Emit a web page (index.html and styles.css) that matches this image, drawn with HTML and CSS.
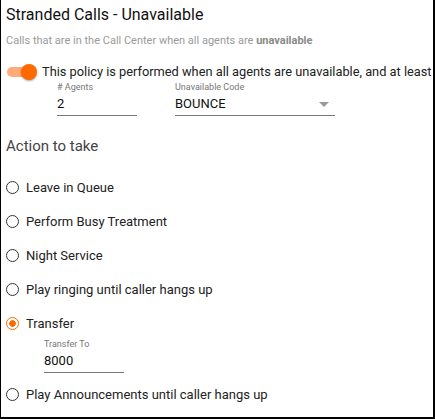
FILE: index.html
```html
<!DOCTYPE html>
<html lang="en">
<head>
    <meta charset="UTF-8">
    <title>Stranded Calls - Unavailable</title>
    <link rel="stylesheet" href="styles.css">
</head>
<body>

<div class="panel">
    <h2 class="title">Stranded Calls - Unavailable</h2>
    <p class="subtitle">Calls that are in the Call Center when all agents are <b>unavailable</b></p>

    <div class="policy">
        <span class="toggle"><span class="thumb"></span></span>
        <span class="policy-text">This policy is performed when all agents are unavailable, and at least</span>
    </div>

    <div class="fields">
        <div class="field agents">
            <label>&#35; Agents</label>
            <div class="value">2</div>
        </div>
        <div class="field code">
            <label>Unavailable Code</label>
            <div class="value">BOUNCE<span class="arrow"></span></div>
        </div>
    </div>

    <h3 class="section">Action to take</h3>

    <div class="options">
        <div class="option"><span class="radio"></span>Leave in Queue</div>
        <div class="option"><span class="radio"></span>Perform Busy Treatment</div>
        <div class="option"><span class="radio"></span>Night Service</div>
        <div class="option"><span class="radio"></span>Play ringing until caller hangs up</div>
        <div class="option"><span class="radio checked"></span>Transfer</div>
        <div class="field transfer">
            <label>Transfer To</label>
            <div class="value">8000</div>
        </div>
        <div class="option"><span class="radio"></span>Play Announcements until caller hangs up</div>
    </div>
</div>

</body>
</html>
```

FILE: styles.css
```css
body {
    margin: 0;
    font-family: Roboto, "Liberation Sans", sans-serif;
    color: #222;
}
.panel {
    width: 435px;
    height: 419px;
    border-left: 1px solid #000;
    border-right: 2px solid #000;
    border-bottom: 2px solid #000;
    padding: 0 0 0 5px;
    box-sizing: border-box;
    overflow: hidden;
}
.title {
    font-size: 16px;
    font-weight: normal;
    margin: 5px 0 0;
    line-height: 20px;
    color: #111;
}
.subtitle {
    font-size: 11px;
    color: #9a9a9a;
    margin: 9px 0 0;
    line-height: 13px;
}
.subtitle b {
    color: #8a8a8a;
}
.policy {
    display: flex;
    align-items: center;
    margin-top: 17px;
    white-space: nowrap;
}
.toggle {
    position: relative;
    display: inline-block;
    width: 28px;
    height: 10px;
    border-radius: 5px;
    background: #ffaa78;
    margin-left: 1px;
    flex-shrink: 0;
}
.thumb {
    position: absolute;
    right: -2px;
    top: -3px;
    width: 16px;
    height: 16px;
    border-radius: 50%;
    background: #ff6a00;
    box-shadow: 0 1px 2px rgba(0, 0, 0, 0.35);
}
.policy-text {
    font-size: 12.8px;
    color: #222;
    margin-left: 7px;
}
.fields {
    display: flex;
    gap: 38px;
    margin: 3px 0 0 51px;
}
.field label {
    display: block;
    font-size: 9px;
    color: #777;
    line-height: 11px;
}
.field .value {
    position: relative;
    font-size: 13px;
    line-height: 17px;
    padding: 2px 0 3px;
    border-bottom: 1px solid #777;
    color: #111;
}
.agents { width: 80px; }
.code { width: 160px; }
.arrow {
    position: absolute;
    right: 6px;
    top: 9px;
    border-left: 5px solid transparent;
    border-right: 5px solid transparent;
    border-top: 5px solid #999;
}
.section {
    font-size: 15px;
    font-weight: normal;
    color: #444;
    margin: 21px 0 0;
    line-height: 19px;
}
.options {
    margin-top: 14px;
}
.option {
    display: flex;
    align-items: center;
    height: 34px;
    font-size: 13px;
    color: #222;
}
.radio {
    width: 11px;
    height: 11px;
    border: 1.5px solid #333;
    border-radius: 50%;
    margin: 0 7px 0 0;
    box-sizing: content-box;
    flex-shrink: 0;
}
.radio.checked {
    border-color: #ff6a00;
    background: radial-gradient(circle, #ff6a00 0 3px, #fff 3.5px);
}
.transfer {
    width: 80px;
    margin: -1px 0 4px 38px;
}
```
